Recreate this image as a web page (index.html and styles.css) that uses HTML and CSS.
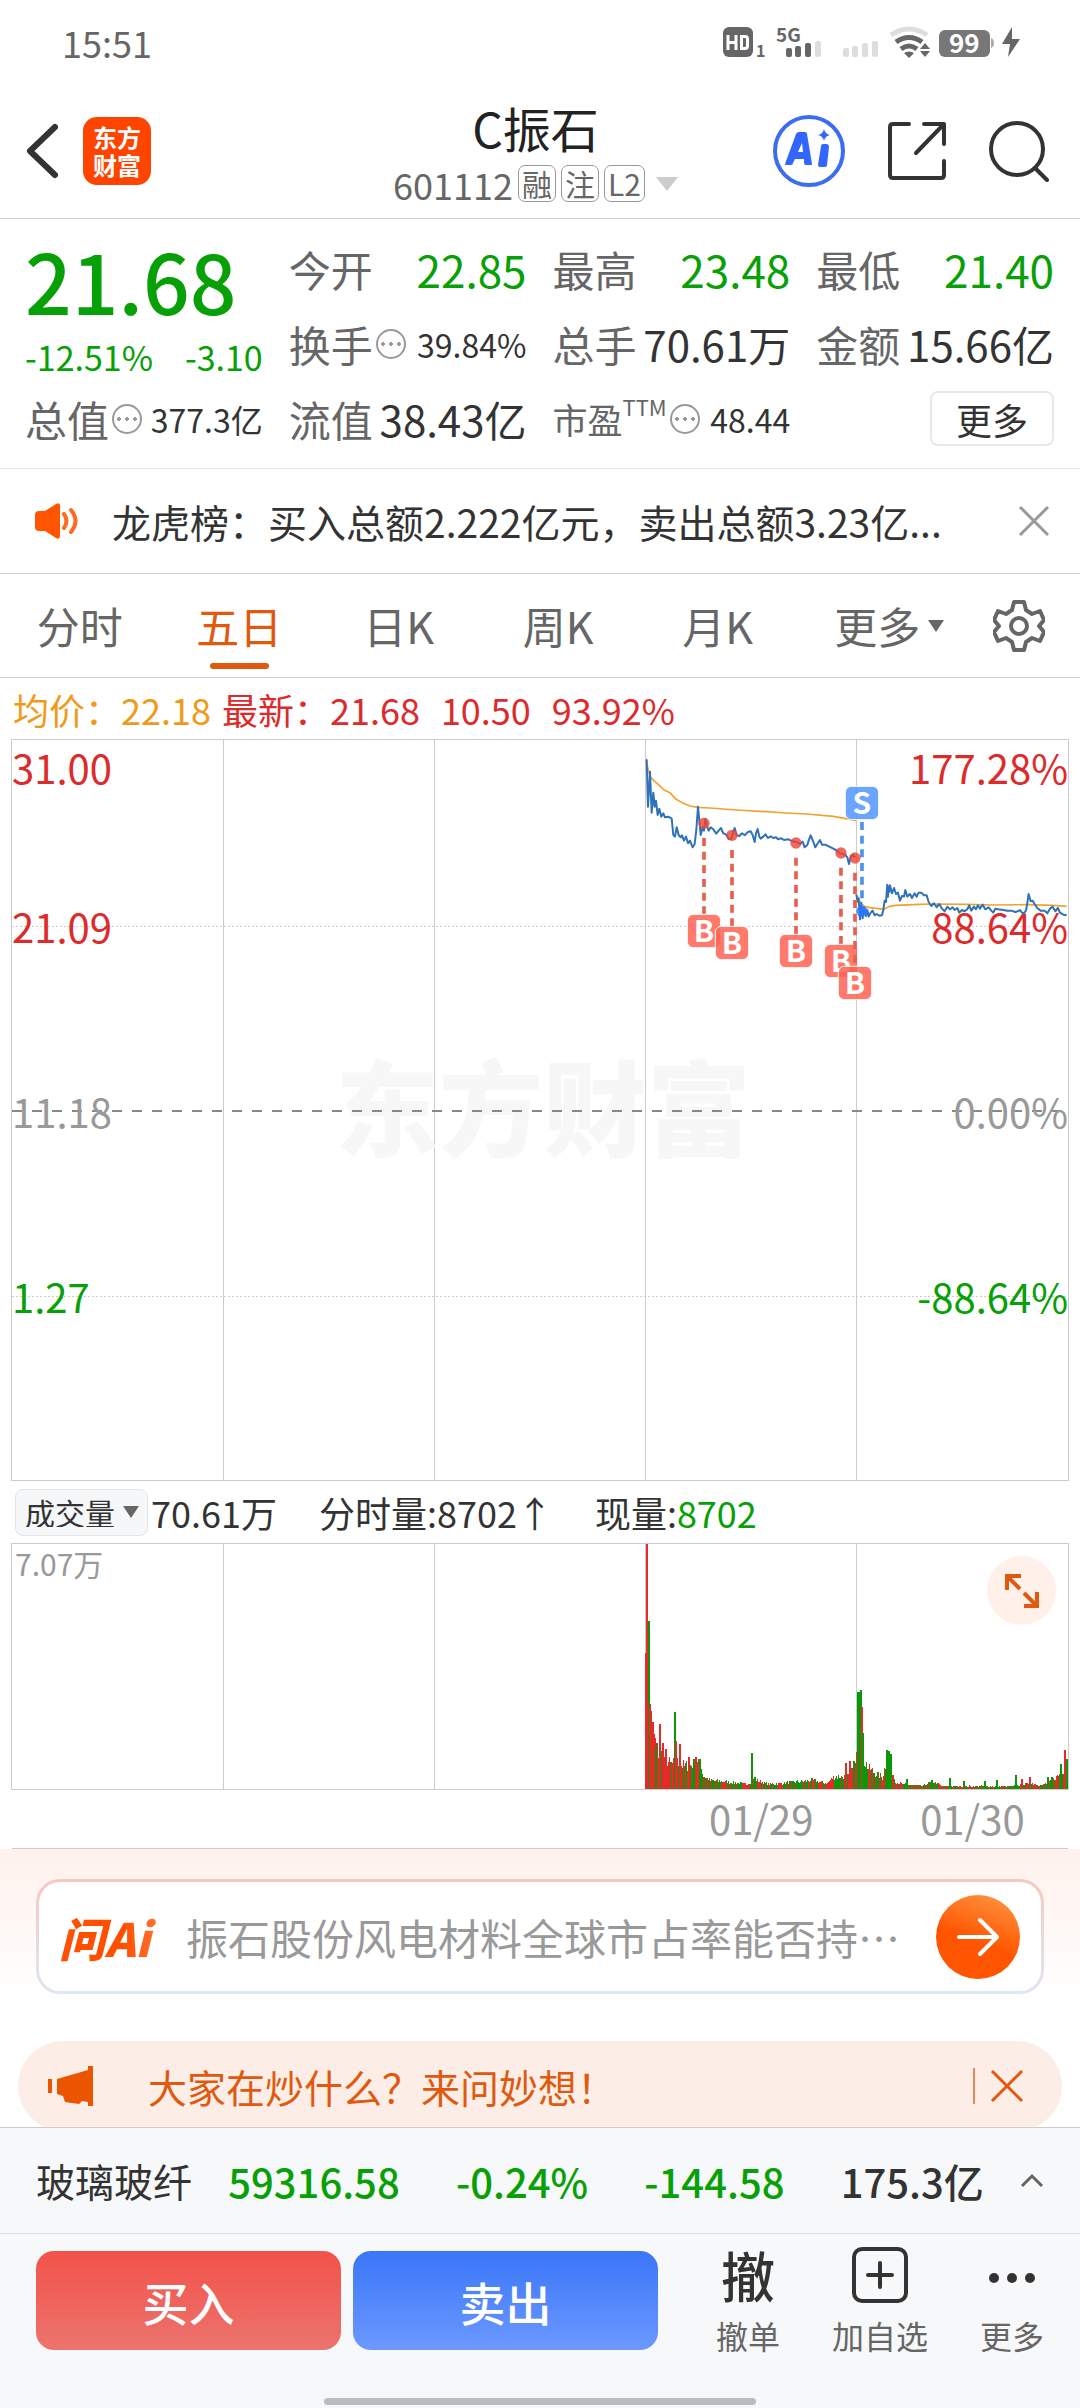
FILE: index.html
```html
<!DOCTYPE html>
<html lang="zh-CN">
<head>
  <meta charset="UTF-8">
  <meta name="viewport" content="width=device-width, initial-scale=1.0">
  <title>C振石 601112</title>
  <link rel="stylesheet" href="styles.css">
</head>
<body>
  <div class="status-bar">
    <span>15:51</span>
    <svg class="status-icons" width="300" height="60" viewBox="720 12 300 60">
      <rect x="723" y="27" width="30" height="30" rx="6" fill="#666"/>
      <path d="M728 35v15M736 35v15M728 42.500h8M741.500 36.500v12h3.500q2.500 0 2.500-2.500v-7q0-2.500-2.500-2.500z" fill="none" stroke="#fff" stroke-width="3"/>
      <text x="756" y="57" font-size="16" font-weight="700" fill="#666">1</text>
      <text x="776" y="42" font-size="19" font-weight="700" fill="#666">5G</text>
      <g fill="#666">
        <rect x="786" y="48" width="6" height="9" rx="2"/>
        <rect x="795" y="46" width="6" height="11" rx="2"/>
        <rect x="805" y="43" width="6" height="14" rx="2"/>
      </g>
      <g fill="#ddd">
        <rect x="815" y="41" width="6" height="16" rx="2"/>
        <rect x="843" y="48" width="6" height="9" rx="2"/>
        <rect x="852" y="46" width="6" height="11" rx="2"/>
        <rect x="862" y="43" width="6" height="14" rx="2"/>
        <rect x="872" y="41" width="6" height="16" rx="2"/>
      </g>
      <path d="M891 35q18-12 36 0" fill="none" stroke="#ddd" stroke-width="5"/>
      <path d="M896 42q13-9 26 0M901 49q8-6 16 0" fill="none" stroke="#666" stroke-width="5"/>
      <path d="M904 53q5-3 10 0l-5 5zM920 49l5-6 5 6zM920 51h10l-5 6z" fill="#666"/>
      <rect x="939" y="30" width="51" height="27" rx="6" fill="#777"/>
      <path d="M991 38q3 1 3 5t-3 5z" fill="#aaa"/>
      <text x="949" y="53" font-size="26" font-weight="700" fill="#fff">99</text>
      <path d="M1012 27l-10 17h8l-2 13 12-18h-8z" fill="#666"/>
    </svg>
  </div>

  <header class="header">
    <div class="header-left">
      <button class="icon-button" aria-label="返回">
        <svg width="40" height="60" viewBox="0 0 40 60"><path d="M33 6L8 30l25 24" fill="none" stroke="#333" stroke-width="6" stroke-linecap="round" stroke-linejoin="round"/></svg>
      </button>
      <a class="brand" href="#">东方<br>财富</a>
    </div>
    <div class="header-title">
      <h1>C振石</h1>
      <div class="code">
        <span>601112</span>
        <span class="tag">融</span>
        <span class="tag">注</span>
        <span class="tag">L2</span>
        <span class="caret"></span>
      </div>
    </div>
    <div class="header-right">
      <button class="icon-button" aria-label="AI">
        <svg width="72" height="72" viewBox="0 0 72 72">
          <circle cx="36" cy="36" r="34" fill="none" stroke="#3c6cf0" stroke-width="4"/>
          <path d="M12 49l11-30q1-2 3-2h6q2 0 2 2l5 30q0 1-1 1h-5q-2 0-2-2v-4h-9l-2 4q0 2-2 2h-5q-1 0-1-1zM25 37h5l-1-9z" fill="#3366ff" fill-rule="evenodd"/>
          <path d="M48 31q0-2 2-2h3q3 0 3 3l-2 18q0 2-3 2h-4q-2 0-2-2zM51 14q1 5 6 6-5 1-6 6-1-5-6-6 5-1 6-6z" fill="#3366ff"/>
        </svg>
      </button>
      <button class="icon-button" aria-label="分享">
        <svg width="60" height="60" viewBox="0 0 60 60" fill="none" stroke="#333" stroke-width="4" stroke-linecap="round" stroke-linejoin="round"><path d="M22 3H6q-3 0-3 3v48q0 3 3 3h48q3 0 3-3V40M37 3h20v20M57 3L29 32"/></svg>
      </button>
      <button class="icon-button" aria-label="搜索">
        <svg width="60" height="62" viewBox="0 0 60 62" fill="none" stroke="#333" stroke-width="4" stroke-linecap="round"><circle cx="28" cy="29" r="26"/><path d="M46 48l12 12"/></svg>
      </button>
    </div>
  </header>

  <section class="quote">
    <div class="price">
      <strong>21.68</strong>
      <div class="change"><span>-12.51%</span><span>-3.10</span></div>
    </div>
    <div class="stat"><span class="name">今开</span><span class="large green">22.85</span></div>
    <div class="stat"><span class="name">最高</span><span class="large green">23.48</span></div>
    <div class="stat"><span class="name">最低</span><span class="large green">21.40</span></div>
    <div class="stat"><span class="name">换手<i class="info"></i></span><span class="small">39.84%</span></div>
    <div class="stat"><span class="name">总手</span><span>70.61万</span></div>
    <div class="stat"><span class="name">金额</span><span>15.66亿</span></div>
    <div class="stat"><span class="name">总值<i class="info"></i></span><span class="small">377.3亿</span></div>
    <div class="stat"><span class="name">流值</span><span>38.43亿</span></div>
    <div class="stat"><span class="name pe">市盈<sup>TTM</sup><i class="info"></i></span><span class="small">48.44</span></div>
    <div class="stat stat-more"><button class="more-button">更多</button></div>
  </section>

  <section class="notice">
    <svg width="46" height="40" viewBox="0 0 46 40"><path d="M2 14q0-4 4-4h6L23 3q4-2 4 2v30q0 4-4 2l-11-7H6q-4 0-4-4z" fill="#ff5500"/><path d="M31 13q5 7 0 14M38 9q9 11 0 22" fill="none" stroke="#ff6a20" stroke-width="4" stroke-linecap="round"/></svg>
    <p>龙虎榜：买入总额2.222亿元，卖出总额3.23亿...</p>
    <button class="icon-button" aria-label="关闭">
      <svg width="32" height="32" viewBox="0 0 32 32"><path d="M2 2l28 28M30 2L2 30" stroke="#999" stroke-width="3"/></svg>
    </button>
  </section>

  <nav class="tabs">
    <div class="tab-list">
      <a href="#">分时</a>
      <a href="#" class="active">五日</a>
      <a href="#">日K</a>
      <a href="#">周K</a>
      <a href="#">月K</a>
      <a href="#" class="tab-more">更多<i class="tri"></i></a>
    </div>
    <button class="icon-button" aria-label="设置">
      <svg width="52" height="54" viewBox="0 0 52 54" fill="none" stroke="#666" stroke-width="4" stroke-linejoin="round"><path d="M21 3h10l2 8 6 4 8-3 4 9-5 6 5 6-4 9-8-3-6 4-2 8H21l-2-8-6-4-8 3-4-9 5-6-5-6 4-9 8 3 6-4z"/><circle cx="26" cy="27" r="8"/></svg>
    </button>
  </nav>

  <div class="legend">
    <span class="avg">均价：22.18</span>
    <span>最新：21.68</span>
    <span class="spaced">10.50</span>
    <span class="spaced">93.92%</span>
  </div>

  <section class="chart">
    <svg viewBox="0 0 1056 740">
      <g stroke="#ccc">
        <path d="M211.500 0v740M422.500 0v740M633.500 0v740M844.500 0v740"/>
        <path d="M0 186.500h1056M0 556.500h1056" stroke-dasharray="2 2"/>
      </g>
      <text class="watermark" x="531" y="409" text-anchor="middle">东方财富</text>
      <path d="M0 371h1056" stroke="#888" stroke-width="2" stroke-dasharray="10 10"/>
      <g transform="translate(608 0) scale(.3333)" fill="none" stroke-linejoin="round">
        <g stroke="#f0a32f" stroke-width="5">
          <polyline points="78,60 86,95 92,112 104,124 118,136 132,150 150,158 166,176 186,188 210,198 234,202 270,204 350,210 420,214 500,219 560,222 640,229 690,238 709,242"/>
          <polyline points="709,464 716,478 728,498 750,503 792,508 806,500 826,496 900,493 940,492 1040,493 1120,495 1220,494 1300,496 1340,499"/>
        </g>
        <g stroke="#2f72b8" stroke-width="6">
          <polyline points="78,60 80,60 84,200 90,95 95,218 100,158 104,200 108,182 113,225 118,206 124,230 130,220 135,232 145,230 155,236 160,285 165,290 170,262 176,285 182,292 186,286 192,302 198,290 204,310 210,302 218,322 224,312 229,270 234,200 238,240 242,285 248,262 252,272 256,236 261,258 266,272 272,262 280,268 289,281 296,272 303,264 310,280 318,283 326,297 334,296 340,275 344,264 350,286 358,288 366,280 374,286 384,276 392,274 398,285 404,306 408,280 413,267 418,290 422,296 430,290 436,283 444,294 452,289 460,294 468,292 474,298 484,295 492,300 505,298 518,304 530,306 540,312 548,305 554,322 562,315 566,302 572,286 578,300 586,322 592,312 600,300 606,314 616,314 628,320 640,326 648,330 660,340 670,342 676,345 682,352 687,372 693,348 700,345 706,352"/>
          <polyline points="709,464 713,485 716,475 720,538 724,488 728,535 732,502 738,528 742,510 746,530 752,518 758,512 764,526 770,522 778,527 786,526 790,510 794,482 798,486 802,434 804,470 806,440 808,456 810,436 816,460 822,444 828,462 834,458 840,482 846,468 852,470 856,450 862,470 870,462 876,474 884,460 890,470 896,458 904,458 912,466 920,466 926,486 934,498 942,490 950,502 958,492 966,506 974,514 982,500 990,508 998,502 1004,510 1012,504 1018,518 1026,510 1034,514 1042,508 1048,496 1054,512 1062,500 1068,508 1074,496 1080,506 1088,494 1096,508 1106,502 1114,512 1120,518 1126,506 1134,508 1150,510 1162,512 1174,512 1186,516 1194,514 1200,510 1206,518 1212,520 1218,512 1222,490 1226,462 1232,484 1238,482 1244,492 1252,504 1262,512 1274,512 1282,520 1290,506 1298,500 1306,514 1314,504 1320,518 1330,524 1340,526"/>
        </g>
        <g id="trades"></g>
      </g>
    </svg>
    <span class="axis red l1">31.00</span>
    <span class="axis red l2">21.09</span>
    <span class="axis gray l3">11.18</span>
    <span class="axis green l4">1.27</span>
    <span class="axis right red l1">177.28%</span>
    <span class="axis right red l2">88.64%</span>
    <span class="axis right gray l3">0.00%</span>
    <span class="axis right green l4">-88.64%</span>
  </section>

  <div class="volume-bar">
    <div class="select-wrap">
      <select aria-label="指标"><option>成交量</option></select>
      <i class="tri"></i>
    </div>
    <span>70.61万</span>
    <span class="minute">分时量:8702↑</span>
    <span class="now">现量:<b>8702</b></span>
  </div>

  <section class="volume">
    <svg viewBox="0 0 1056 245">
      <path d="M211.500 0v245M422.500 0v245M633.500 0v245M844.500 0v245" stroke="#ccc"/>
      <g id="bars"></g>
    </svg>
    <span class="volume-max">7.07万</span>
    <button class="expand" aria-label="全屏">
      <svg width="36" height="36" viewBox="0 0 36 36" fill="none" stroke="#e0590f" stroke-width="4"><path d="M3 17V3h14M3 3l13 13M20 33h13V19M33 33L20 20"/></svg>
    </button>
  </section>
  <div class="dates"><span>01/29</span><span>01/30</span></div>

  <section class="ask">
    <form class="ask-box">
      <span class="ask-logo">问Ai</span>
      <input type="text" aria-label="提问" placeholder="振石股份风电材料全球市占率能否持⋯">
      <button type="button" aria-label="发送">
        <svg width="42" height="40" viewBox="0 0 42 40" fill="none" stroke="#fff" stroke-width="4" stroke-linecap="round" stroke-linejoin="round"><path d="M2 20h37M23 3l17 17-17 17"/></svg>
      </button>
    </form>
  </section>

  <section class="banner-wrap">
    <div class="banner">
      <svg width="46" height="40" viewBox="0 0 46 40" fill="#eb5500"><path d="M0 13h4v14H0zM9 13L40 4V0h5v40h-5v-4l-6-1-3 3-14-2-2-6-6-2z"/></svg>
      <a href="#">大家在炒什么？来问妙想！</a>
      <span class="divider"></span>
      <button class="icon-button" aria-label="关闭">
        <svg width="34" height="32" viewBox="0 0 34 32"><path d="M2 1l30 30M32 1L2 31" stroke="#e0590f" stroke-width="3"/></svg>
      </button>
    </div>
  </section>

  <footer class="bottom">
    <div class="index-row">
      <span class="index-name">玻璃玻纤</span>
      <b class="green">59316.58</b>
      <b class="green">-0.24%</b>
      <b class="green">-144.58</b>
      <b>175.3亿</b>
      <svg width="24" height="16" viewBox="0 0 24 16"><path d="M2 13L12 3l10 10" fill="none" stroke="#666" stroke-width="3"/></svg>
    </div>
    <div class="actions">
      <button class="trade buy">买入</button>
      <button class="trade sell">卖出</button>
      <div class="action-list">
        <button class="action"><span class="action-icon cancel">撤</span>撤单</button>
        <button class="action">
          <span class="action-icon"><svg width="56" height="56" viewBox="0 0 56 56" fill="none" stroke="#333" stroke-width="4" stroke-linecap="round"><rect x="2" y="2" width="52" height="52" rx="8"/><path d="M28 16v24M16 28h24"/></svg></span>加自选
        </button>
        <button class="action">
          <span class="action-icon"><svg width="48" height="56" viewBox="0 0 48 56" fill="#333"><circle cx="6" cy="31" r="5"/><circle cx="24" cy="31" r="5"/><circle cx="42" cy="31" r="5"/></svg></span>更多
        </button>
      </div>
    </div>
    <div class="home-bar"></div>
  </footer>

  <script src="script.js"></script>
</body>
</html>
```

FILE: styles.css
```css
* {
  margin: 0;
  padding: 0;
  box-sizing: border-box;
}

body {
  min-height: 100vh;
  display: flex;
  flex-direction: column;
  font-family: "Noto Sans CJK SC", sans-serif;
  font-size: 36px;
  line-height: 1;
  color: #333;
  background: #fff;
}

button,
input,
select {
  font: inherit;
  color: inherit;
  background: none;
  border: none;
}

a {
  color: inherit;
  text-decoration: none;
}

svg {
  display: block;
}

.green {
  color: #07a007;
}

.red {
  color: #dd2a2a;
}

.gray {
  color: #999;
}

.icon-button {
  display: flex;
  cursor: pointer;
}

/* status bar and header */
.status-bar {
  display: flex;
  justify-content: space-between;
  align-items: center;
  height: 84px;
  padding: 0 60px 0 62px;
  color: #666;
}

.header {
  display: grid;
  grid-template-columns: 1fr auto 1fr;
  align-items: center;
  height: 135px;
  padding: 0 31px 0 22px;
  border-bottom: 1px solid #ccc;
}

.header-left,
.header-right {
  display: flex;
  align-items: center;
}

.header-left {
  gap: 21px;
}

.header-right {
  justify-content: flex-end;
  gap: 42px;
}

.brand {
  width: 68px;
  height: 68px;
  padding-top: 6px;
  border-radius: 14px;
  background: #ff4400;
  color: #fff;
  font-size: 24px;
  font-weight: 700;
  line-height: 28px;
  text-align: center;
}

.header-title h1 {
  margin-bottom: 11px;
  font-size: 48px;
  font-weight: 400;
  line-height: 54px;
  text-align: center;
  color: #222;
}

.code {
  display: flex;
  align-items: center;
  gap: 5px;
  color: #666;
}

.tag {
  height: 37px;
  padding: 0 3px;
  border: 1px solid #999;
  border-radius: 7px;
  font-size: 30px;
  line-height: 34px;
}

.caret {
  margin-left: 6px;
  border: 11px solid transparent;
  border-top: 14px solid #ccc;
  border-bottom: 0;
}

/* quote */
.quote {
  display: grid;
  grid-template-columns: repeat(4, 1fr);
  grid-auto-rows: 75px;
  column-gap: 26px;
  padding: 12px 26px 12px 25px;
  border-bottom: 1px solid #e8e8e8;
}

.price {
  grid-row: span 2;
  color: #07a007;
}

.price strong {
  display: block;
  font-size: 82px;
  font-weight: 500;
  line-height: 98px;
}

.change {
  display: flex;
  justify-content: space-between;
  font-size: 34px;
  line-height: 56px;
}

.stat {
  display: flex;
  justify-content: space-between;
  align-items: center;
  font-size: 42px;
}

.stat .name {
  display: flex;
  align-items: center;
  color: #666;
}

.stat .large {
  font-size: 44px;
}

.stat .small {
  font-size: 32px;
}

.stat .pe {
  font-size: 35px;
}

.pe sup {
  align-self: flex-start;
  font-size: 22px;
  line-height: 10px;
}

.info {
  width: 30px;
  height: 30px;
  margin-left: 3px;
  border: 2px solid #999;
  border-radius: 50%;
  background: radial-gradient(circle, #999 2px, transparent 2px) center / 8px 8px no-repeat, radial-gradient(circle at 5px 13px, #999 2px, transparent 2px), radial-gradient(circle at 21px 13px, #999 2px, transparent 2px);
}

.stat-more {
  justify-content: flex-end;
}

.more-button {
  width: 124px;
  height: 55px;
  border: 2px solid #e8e8e8;
  border-radius: 8px;
  font-size: 36px;
  line-height: 48px;
}

/* notice */
.notice {
  display: flex;
  align-items: center;
  height: 105px;
  padding: 0 30px 0 33px;
  border-bottom: 1px solid #ccc;
}

.notice p {
  flex: 1;
  margin-left: 33px;
  font-size: 39px;
  white-space: nowrap;
}

/* tabs */
.tabs {
  display: flex;
  align-items: center;
  gap: 36px;
  height: 104px;
  padding-right: 35px;
  border-bottom: 1px solid #ccc;
  font-size: 43px;
  color: #666;
}

.tab-list {
  flex: 1;
  display: grid;
  grid-template-columns: repeat(6, 1fr);
  height: 100%;
}

.tabs a {
  display: flex;
  justify-content: center;
  align-items: center;
}

.tabs .active {
  position: relative;
  color: #e0590f;
}

.tabs .active::after {
  content: "";
  position: absolute;
  left: 50px;
  right: 50px;
  bottom: 8px;
  height: 6px;
  border-radius: 3px;
  background: #e0590f;
}

.tri {
  margin-left: 8px;
  border: 8px solid transparent;
  border-top: 12px solid #666;
  border-bottom: 0;
}

.tab-more .tri {
  margin-right: -24px;
}

/* chart */
.legend {
  display: flex;
  align-items: center;
  gap: 11px;
  height: 62px;
  padding-left: 13px;
  color: #dd2a2a;
}

.legend .avg {
  color: #f09a1a;
}

.legend .spaced {
  margin-left: 10px;
}

.chart,
.volume {
  position: relative;
  margin: 0 12px;
  outline: 1px solid #ccc;
}

.watermark {
  font-size: 104px;
  font-weight: 900;
  fill: #f7f7f7;
}

.axis {
  position: absolute;
  left: 0;
  font-size: 40px;
  line-height: 46px;
}

.axis.right {
  left: auto;
  right: 0;
}

.l1 {
  top: 4px;
}

.l2 {
  top: 22%;
}

.l3 {
  top: 47%;
}

.l4 {
  top: 72%;
}

.badge {
  font-size: 90px;
  font-weight: 700;
  fill: #fff;
}

/* volume */
.volume-bar {
  display: flex;
  align-items: center;
  height: 64px;
  padding-left: 15px;
}

.select-wrap {
  display: flex;
  align-items: center;
  height: 47px;
  padding: 0 8px 0 9px;
  margin-right: 3px;
  border: 1px solid #e2e4e8;
  border-radius: 8px;
  background: #f6f7f9;
}

.select-wrap select {
  appearance: none;
  font-size: 30px;
}

.volume-bar .minute,
.volume-bar .now {
  margin-left: 42px;
}

.now b {
  font-weight: 400;
  color: #07a007;
}

.volume-max {
  position: absolute;
  left: 3px;
  top: 4px;
  font-size: 30px;
  color: #999;
}

.expand {
  position: absolute;
  top: 12px;
  right: 12px;
  display: grid;
  place-items: center;
  width: 69px;
  height: 69px;
  border-radius: 50%;
  background: #fff1ea;
}

.dates {
  display: grid;
  grid-template-columns: repeat(5, 1fr);
  margin: 0 12px;
  border-bottom: 1px solid #ccc;
  font-size: 40px;
  line-height: 59px;
  text-align: center;
  color: #999;
}

.dates span {
  padding-left: 20px;
}

.dates span:first-child {
  grid-column-start: 4;
}

/* ask box */
.ask {
  padding: 30px 36px 47px;
  background: linear-gradient(#fff1ec, #fff 80%);
}

.ask-box {
  display: flex;
  align-items: center;
  height: 115px;
  padding: 0 21px 0 20px;
  border: 3px solid transparent;
  border-radius: 24px;
  background: linear-gradient(#fff, #fff) padding-box, linear-gradient(#f6c8be, #dfe7f4) border-box;
}

.ask-logo {
  width: 127px;
  font-size: 46px;
  font-weight: 900;
  font-style: italic;
  line-height: 60px;
  color: transparent;
  background: linear-gradient(90deg, #ff5000 50%, #ff8a50);
  background-clip: text;
}

.ask-box input {
  flex: 1;
  min-width: 0;
  font-size: 42px;
}

.ask-box input::placeholder {
  color: #999;
}

.ask-box button {
  display: grid;
  place-items: center;
  width: 84px;
  height: 84px;
  border-radius: 50%;
  background: linear-gradient(200deg, #ff9a45, #ff5500 55%);
}

/* banner */
.banner-wrap {
  height: 86px;
  padding: 0 18px;
  overflow: hidden;
}

.banner {
  display: flex;
  align-items: center;
  height: 90px;
  padding: 0 38px 0 30px;
  border-radius: 45px;
  background: #fceee6;
  color: #e0590f;
}

.banner a {
  flex: 1;
  margin-left: 54px;
  font-size: 39px;
}

.divider {
  width: 2px;
  height: 36px;
  margin-right: 15px;
  background: #e58a5a;
}

/* bottom */
.bottom {
  flex: 1;
  display: flex;
  flex-direction: column;
  border-top: 1px solid #ccc;
  background: #f7f8fa;
}

.index-row {
  display: flex;
  justify-content: space-between;
  align-items: center;
  height: 106px;
  padding: 0 36px;
  border-bottom: 1px solid #dfe0e2;
  font-size: 40px;
}

.index-row b {
  margin: 0 20px;
  font-weight: 500;
}

.index-name {
  font-size: 39px;
}

.actions {
  display: flex;
  gap: 12px;
  padding: 17px 36px 0 36px;
}

.trade {
  flex: 1;
  height: 99px;
  border-radius: 18px;
  font-size: 46px;
  font-weight: 500;
  color: #fff;
}

.buy {
  background: linear-gradient(#f2524a, #ec746e);
}

.sell {
  background: linear-gradient(#3a76f8, #6c98ff);
}

.action-list {
  display: flex;
  gap: 52px;
  margin-left: 46px;
}

.action {
  display: flex;
  flex-direction: column;
  align-items: center;
  font-size: 32px;
  color: #666;
  white-space: nowrap;
}

.action-icon {
  display: grid;
  place-items: center;
  height: 56px;
  margin: -4px 0 16px;
}

.cancel {
  font-size: 54px;
  font-weight: 500;
  color: #333;
}

.home-bar {
  width: 40%;
  height: 7px;
  margin: auto auto 3px;
  border-radius: 4px;
  background: #bbbcbe;
}
```

FILE: script.js
```js
const RED = '#e62a2a';
const GREEN = '#0a980a';

// x, y of the trade on the price line, y of its badge
const trades = [
  ['B', 252, 250, 573],
  ['B', 336, 286, 609],
  ['B', 528, 309, 633],
  ['B', 663, 339, 663],
  ['B', 705, 354, 729],
  ['S', 726, 514, 189]
];

document.getElementById('trades').innerHTML = trades.map(([type, x, y, badge]) => {
  const buy = type === 'B';
  const line = buy ? '#e8604f' : '#4d92ec';
  const dot = buy ? '#ee4335' : '#2979ff';
  const fill = buy ? '#ff6352' : '#5096ff';
  return `
    <path d="M${x} ${buy ? y + 44 : 246}V${buy ? badge - 50 : y - 20}" stroke="${line}" stroke-width="11" stroke-dasharray="24 17"/>
    <circle cx="${x}" cy="${y}" r="17" fill="${dot}" opacity=".8"/>
    <rect x="${x - 50}" y="${badge - 50}" width="100" height="100" rx="18" fill="${fill}" fill-opacity=".85" stroke="#fff" stroke-width="3"/>
    <text class="badge" x="${x}" y="${badge + 34}" text-anchor="middle">${type}</text>
  `;
}).join('');

// volume levels along both days: [x, height]
const levels = [
  [632, 130], [636, 110], [640, 60], [646, 38], [652, 34], [658, 26], [664, 28],
  [672, 24], [680, 26], [688, 26], [691, 14], [698, 9], [720, 7], [735, 5],
  [742, 10], [756, 5], [780, 7], [800, 9], [815, 6], [822, 13], [835, 13],
  [842, 24], [845, 60], [850, 60], [852, 30], [856, 22], [864, 16], [870, 12],
  [874, 30], [879, 22], [883, 8], [890, 5], [910, 3], [920, 8], [930, 3],
  [1000, 3], [1018, 6], [1030, 4], [1038, 8], [1046, 14], [1055, 26]
];

const spikes = [
  [633, 136, RED], [634, 245, RED], [636, 168, GREEN], [637, 85, RED], [638, 78, RED],
  [640, 67, RED], [641, 55, RED], [643, 42, GREEN], [647, 65, RED], [650, 46, RED],
  [653, 40, RED], [662, 77, GREEN], [663, 48, RED], [667, 45, RED], [676, 32, RED],
  [681, 30, GREEN], [683, 32, RED], [687, 30, GREEN], [739, 36, GREEN], [742, 12, GREEN],
  [833, 26, RED], [837, 28, RED], [841, 28, GREEN], [845, 97, GREEN], [846, 97, GREEN],
  [848, 99, GREEN], [849, 82, RED], [850, 56, GREEN], [874, 39, GREEN], [876, 38, GREEN],
  [878, 35, GREEN], [894, 10, GREEN], [937, 11, GREEN], [951, 8, GREEN], [972, 8, GREEN],
  [984, 9, GREEN], [1003, 14, GREEN], [1009, 10, RED], [1017, 12, RED], [1035, 12, GREEN],
  [1039, 12, GREEN], [1048, 25, GREEN], [1052, 39, RED], [1054, 30, GREEN]
];

function levelAt(x) {
  const i = levels.findIndex(p => p[0] > x);
  if (i < 1) return levels[levels.length - 1][1];
  const [x0, h0] = levels[i - 1];
  const [x1, h1] = levels[i];
  return h0 + (h1 - h0) * (x - x0) / (x1 - x0);
}

function bar(x, h, width, color) {
  return `<rect x="${x}" y="${245 - h}" width="${width}" height="${h}" fill="${color}"/>`;
}

let seed = 7;
let bars = '';
for (let x = 633; x < 1056; x++) {
  seed = (seed * 16807) % 2147483647;
  const r = seed / 2147483647;
  const h = Math.max(2, Math.round(levelAt(x) * (0.7 + r * 0.5)));
  bars += bar(x, h, 1, (seed >> 3) % 2 ? RED : GREEN);
}
spikes.forEach(([x, h, color]) => { bars += bar(x, h, 2, color); });
document.getElementById('bars').innerHTML = bars;
```
